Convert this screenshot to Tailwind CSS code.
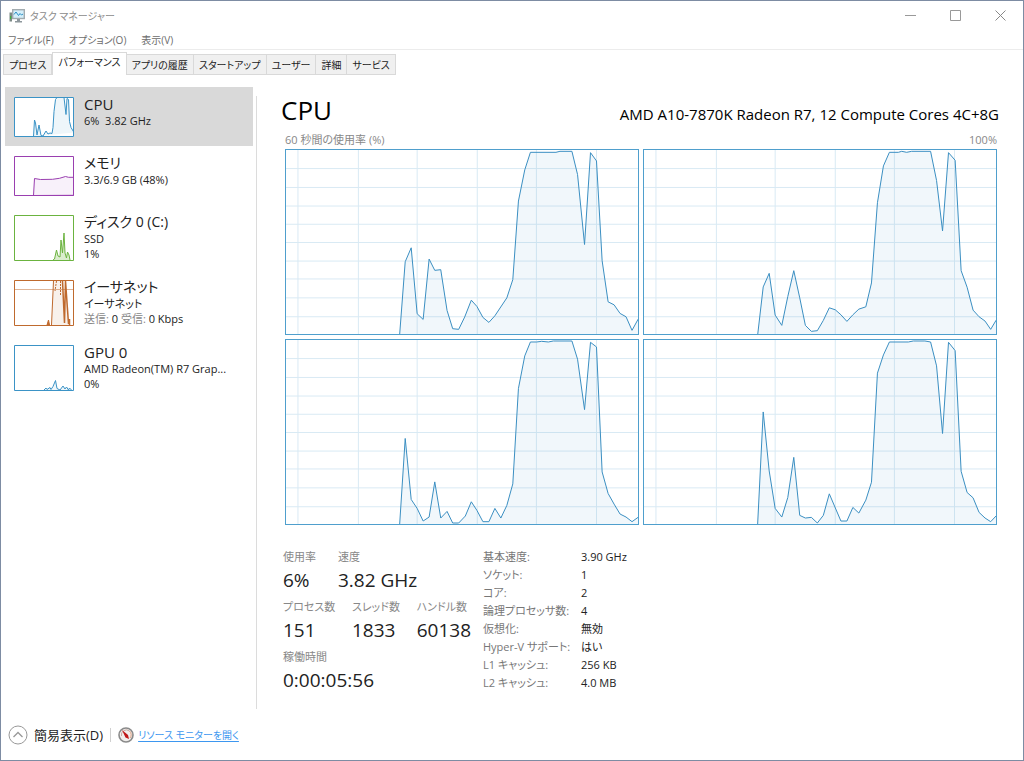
<!DOCTYPE html>
<html lang="ja">

<head>
    <meta charset="UTF-8">
    <meta name="viewport" content="width=device-width, initial-scale=1.0">
    <title>タスク マネージャー</title>
    <script src="https://cdn.jsdelivr.net/npm/@tailwindcss/browser@4"></script>
</head>

<body>
    <div class="min-h-screen flex flex-col bg-white border border-[#7d8ca3] text-[11px] leading-4 text-[#222] font-['Open_Sans','Noto_Sans_CJK_JP',sans-serif] [font-feature-settings:'palt']">

        <!-- Title bar -->
        <header class="flex items-center justify-between h-[29px] pl-2 text-[#8c8c8c]">
            <div class="flex items-center gap-[5px]">
                <svg class="w-4 h-4" viewBox="0 0 16 16">
                    <rect x="0.5" y="4.5" width="2.5" height="9" fill="#7c8a86" />
                    <rect x="1" y="8" width="1.2" height="3" fill="#3fb03f" />
                    <rect x="3.7" y="1.7" width="11.6" height="8.8" fill="#d4effa" stroke="#a2abaf" stroke-width="1.4" />
                    <path d="M5 6.500l2-2.500 2.500 3.500 1.500-2 1.500 1.500 1.500-1" fill="none" stroke="#2b8fc4" />
                    <path d="M8 11h3v2h2v1.500h-7V13h2z" fill="#8d979c" />
                </svg>
                <h1 class="text-[10px]">タスク マネージャー</h1>
            </div>
            <div class="flex">
                <button class="w-[45px] h-7 flex items-center justify-center" aria-label="最小化">
                    <svg class="w-[11px] h-[11px]" viewBox="0 0 11 11" fill="none" stroke="#999"><path d="M0 5.5h11" /></svg>
                </button>
                <button class="w-[45px] h-7 flex items-center justify-center" aria-label="最大化">
                    <svg class="w-[11px] h-[11px]" viewBox="0 0 11 11" fill="none" stroke="#999"><path d="M.5 .5h10v10H.5z" /></svg>
                </button>
                <button class="w-[45px] h-7 flex items-center justify-center" aria-label="閉じる">
                    <svg class="w-[11px] h-[11px]" viewBox="0 0 11 11" fill="none" stroke="#888"><path d="M.5 .5l10 10M10.5 .5l-10 10" /></svg>
                </button>
            </div>
        </header>

        <!-- Menu -->
        <nav class="flex items-center gap-[15px] h-5 pl-[7px] text-[10px] text-[#6c6c6c] border-b border-[#ececec]">
            <button>ファイル(F)</button>
            <button>オプション(O)</button>
            <button>表示(V)</button>
        </nav>

        <!-- Tabs -->
        <div class="self-start flex items-end h-[25px] ml-0.5 text-[10px] text-[#222] border-b border-[#d9d9d9]" role="tablist">
            <button class="h-5 px-[5px] bg-[#f0f0f0] border border-b-0 border-[#d9d9d9]" role="tab">プロセス</button>
            <button class="h-[23px] -mb-px px-[5px] pb-1 bg-white border border-b-0 border-[#d9d9d9]" role="tab" aria-selected="true">パフォーマンス</button>
            <button class="h-5 px-[5px] bg-[#f0f0f0] border border-b-0 border-l-0 border-[#d9d9d9]" role="tab">アプリの履歴</button>
            <button class="h-5 px-[5px] bg-[#f0f0f0] border border-b-0 border-l-0 border-[#d9d9d9]" role="tab">スタートアップ</button>
            <button class="h-5 px-[5px] bg-[#f0f0f0] border border-b-0 border-l-0 border-[#d9d9d9]" role="tab">ユーザー</button>
            <button class="h-5 px-[5px] bg-[#f0f0f0] border border-b-0 border-l-0 border-[#d9d9d9]" role="tab">詳細</button>
            <button class="h-5 px-[5px] bg-[#f0f0f0] border border-b-0 border-l-0 border-[#d9d9d9]" role="tab">サービス</button>
        </div>

        <div class="flex-1 flex pt-3">
            <!-- Resource list -->
            <aside class="w-[248px] ml-1 shrink-0">
                <button class="w-full flex items-start gap-2.5 pl-[9px] pb-[9px] bg-[#d9d9d9] text-left leading-[15px]">
                    <svg class="w-[60px] h-10 mt-2.5 bg-white" viewBox="0 0 60 40" fill="none" stroke="#3b93c6">
                        <path d="M19.500 39.500L20.500 23l1 3 1.500 12 2-10 2 10.500 2 .5 3-5 2 3 2-1 2 .5 1-6 1-16 1.500-12 1.500-2h7l2 17 1-16 1.500 1 1 22 1.500 6 3 5" fill="#117dbb" fill-opacity=".07" />
                        <path d="M.5 .5h59v39H.5z" />
                    </svg>
                    <span class="pt-2">
                        <span class="block text-[15px] leading-[18px]">CPU</span>
                        <span class="block whitespace-pre">6%  3.82 GHz</span>
                    </span>
                </button>
                <button class="w-full flex items-start gap-2.5 pl-[9px] pb-[9px] text-left leading-[15px]">
                    <svg class="w-[60px] h-10 mt-2.5" viewBox="0 0 60 40" fill="none" stroke="#9a3fb0">
                        <path d="M19.500 39.500L20.500 22.500l6 1 12-.2 7-1 6-1.800 3 .8h5v18z" fill="#8b12ae" fill-opacity=".06" />
                        <path d="M.5 .5h59v39H.5z" />
                    </svg>
                    <span class="pt-2">
                        <span class="block text-sm leading-[18px]">メモリ</span>
                        <span class="block">3.3/6.9 GB (48%)</span>
                    </span>
                </button>
                <button class="w-full flex items-start gap-2.5 pl-[9px] pb-[9px] text-left leading-[15px]">
                    <svg class="w-[60px] h-[46px] mt-2.5" viewBox="0 0 60 46" fill="none" stroke="#6bb33f">
                        <path d="M39 45l1.500-1 2-9 1.500 6 2 1 1-17 1.500 13 1.500-20 1 20 1.500 5 1-6 1.500 3 1 5" fill="#4da60c" fill-opacity=".2" />
                        <path d="M.5 .5h59v45H.5z" />
                    </svg>
                    <span class="pt-2">
                        <span class="block text-sm leading-[18px]">ディスク 0 (C:)</span>
                        <span class="block">SSD</span>
                        <span class="block">1%</span>
                    </span>
                </button>
                <button class="w-full flex items-start gap-2.5 pl-[9px] pb-[9px] text-left leading-[15px]">
                    <svg class="w-[60px] h-[46px] mt-2.5" viewBox="0 0 60 46" fill="none" stroke="#bf6a2e">
                        <path d="M37.500 45L39.500 1h10l1 43 1.500-43 3 37 1 7z" fill="#a74f01" fill-opacity=".08" stroke="none" />
                        <path d="M1 9.500h58" stroke-opacity=".5" />
                        <path d="M33 45l1.500-5 1 5z" fill="#bf6a2e" />
                        <path d="M37.500 45L39.500 1" />
                        <path d="M42.500 1L41 11M46.500 1v15" stroke-dasharray="2 1" />
                        <path d="M48.500 1l2 42L51.500 1l3 43M55.500 45v-6" stroke-width="1.500" />
                        <path d="M.5 .5h59v45H.5z" />
                    </svg>
                    <span class="pt-2">
                        <span class="block text-sm leading-[18px]">イーサネット</span>
                        <span class="block">イーサネット</span>
                        <span class="block"><span class="text-[#888]">送信:</span> 0 <span class="text-[#888]">受信:</span> 0 Kbps</span>
                    </span>
                </button>
                <button class="w-full flex items-start gap-2.5 pl-[9px] pb-[9px] text-left leading-[15px]">
                    <svg class="w-[60px] h-[46px] mt-2.5" viewBox="0 0 60 46" fill="none" stroke="#3b93c6">
                        <path d="M30 45l2-2 1 1.500 3-2 1 2 2-3 2.500-6 1.500 8 3 1.500 3-4 2 3 1.500-2 2 3 1-2 2 2" fill="#117dbb" fill-opacity=".07" />
                        <path d="M.5 .5h59v45H.5z" />
                    </svg>
                    <span class="pt-2">
                        <span class="block text-[15px] leading-[18px]">GPU 0</span>
                        <span class="block">AMD Radeon(TM) R7 Grap...</span>
                        <span class="block">0%</span>
                    </span>
                </button>
            </aside>

            <!-- Details -->
            <main class="flex-1 mt-[9px] ml-[3px] pl-6 pr-6 border-l border-[#dcdcdc]">
                <div class="flex items-baseline justify-between text-black">
                    <h2 class="text-[26px] leading-7">CPU</h2>
                    <p class="text-[15px]">AMD A10-7870K Radeon R7, 12 Compute Cores 4C+8G</p>
                </div>
                <div class="flex justify-between mt-2 pl-1 pr-0.5 text-[#888]">
                    <span>60 秒間の使用率 (%)</span>
                    <span>100%</span>
                </div>

                <svg class="hidden">
                    <defs>
                        <path id="grid" vector-effect="non-scaling-stroke" d="M36 0v555M218 0v555M395 0v555M576 0v555M754 0v555M935 0v555M0 56h1060M0 113h1060M0 169h1060M0 224h1060M0 279h1060M0 335h1060M0 389h1060M0 446h1060M0 503h1060" />
                    </defs>
                </svg>
                <div class="grid grid-cols-2 gap-1 mt-px pl-1 pr-0.5">
                    <svg class="w-full h-[186px] border border-[#4f9fcd]" viewBox="0 0 1060 555" preserveAspectRatio="none" fill="none">
                        <use href="#grid" stroke="#d9eaf4" />
                        <polyline vector-effect="non-scaling-stroke" fill="#117dbb" fill-opacity=".06" stroke="#3b8fc2" points="342,560 359,337 377,295 395,494 413,511 431,329 448,363 466,361 485,484 502,539 520,541 538,504 558,453 575,472 593,505 611,520 629,500 665,446 683,391 700,154 719,60 736,7 813,7 825,4 861,4 878,74 899,285 917,8 935,33 952,334 970,458 988,467 1006,493 1024,503 1042,544 1060,511 1066,500 1066,560" />
                    </svg>
                    <svg class="w-full h-[186px] border border-[#4f9fcd]" viewBox="0 0 1060 555" preserveAspectRatio="none" fill="none">
                        <use href="#grid" stroke="#d9eaf4" />
                        <polyline vector-effect="non-scaling-stroke" fill="#117dbb" fill-opacity=".06" stroke="#3b8fc2" points="342,560 359,413 377,372 395,498 415,529 433,442 451,364 469,446 486,529 504,547 522,545 540,514 558,476 576,482 593,497 611,517 629,497 647,480 668,473 685,401 703,159 721,48 739,7 766,7 776,4 791,7 806,4 863,4 881,92 899,244 917,8 937,31 955,364 973,414 991,483 1009,503 1027,516 1044,541 1060,514 1066,504 1066,560" />
                    </svg>
                    <svg class="w-full h-[186px] border border-[#4f9fcd]" viewBox="0 0 1060 555" preserveAspectRatio="none" fill="none">
                        <use href="#grid" stroke="#d9eaf4" />
                        <polyline vector-effect="non-scaling-stroke" fill="#117dbb" fill-opacity=".06" stroke="#3b8fc2" points="342,560 359,297 377,481 395,508 413,546 431,534 448,428 466,537 485,517 502,552 520,552 540,531 558,488 575,514 593,548 611,548 629,508 647,537 665,499 683,434 700,146 719,48 736,6 755,6 770,4 790,6 805,3 861,3 878,58 899,210 917,7 935,21 952,398 970,463 988,495 1006,525 1024,534 1042,548 1060,535 1066,530 1066,560" />
                    </svg>
                    <svg class="w-full h-[186px] border border-[#4f9fcd]" viewBox="0 0 1060 555" preserveAspectRatio="none" fill="none">
                        <use href="#grid" stroke="#d9eaf4" />
                        <polyline vector-effect="non-scaling-stroke" fill="#117dbb" fill-opacity=".06" stroke="#3b8fc2" points="342,560 359,217 377,395 395,508 415,534 433,475 451,354 469,529 486,537 504,535 522,552 540,529 558,464 593,546 611,546 629,505 647,522 668,483 685,429 703,100 721,45 739,6 796,6 811,3 846,3 863,6 881,78 899,282 917,7 937,32 955,396 973,460 991,476 1009,520 1027,537 1044,548 1060,531 1066,525 1066,560" />
                    </svg>
                </div>

                <div class="flex gap-3 mt-6 pl-0.5">
                    <div class="w-[188px]">
                        <dl class="flex gap-[22px] mb-1">
                            <div>
                                <dt class="text-[#888]">使用率</dt>
                                <dd class="text-[19px] leading-[30px]">6%</dd>
                            </div>
                            <div>
                                <dt class="text-[#888]">速度</dt>
                                <dd class="text-[19px] leading-[30px]">3.82 GHz</dd>
                            </div>
                        </dl>
                        <dl class="flex justify-between mb-1">
                            <div>
                                <dt class="text-[#888]">プロセス数</dt>
                                <dd class="text-[19px] leading-[30px]">151</dd>
                            </div>
                            <div>
                                <dt class="text-[#888]">スレッド数</dt>
                                <dd class="text-[19px] leading-[30px]">1833</dd>
                            </div>
                            <div>
                                <dt class="text-[#888]">ハンドル数</dt>
                                <dd class="text-[19px] leading-[30px]">60138</dd>
                            </div>
                        </dl>
                        <dl>
                            <dt class="text-[#888]">稼働時間</dt>
                            <dd class="text-[19px] leading-[30px]">0:00:05:56</dd>
                        </dl>
                    </div>
                    <dl class="grid grid-cols-[98px_auto] auto-rows-[18px] content-start">
                        <dt class="text-[#777]">基本速度:</dt>
                        <dd>3.90 GHz</dd>
                        <dt class="text-[#777]">ソケット:</dt>
                        <dd>1</dd>
                        <dt class="text-[#777]">コア:</dt>
                        <dd>2</dd>
                        <dt class="text-[#777]">論理プロセッサ数:</dt>
                        <dd>4</dd>
                        <dt class="text-[#777]">仮想化:</dt>
                        <dd>無効</dd>
                        <dt class="text-[#777]">Hyper-V サポート:</dt>
                        <dd>はい</dd>
                        <dt class="text-[#777]">L1 キャッシュ:</dt>
                        <dd>256 KB</dd>
                        <dt class="text-[#777]">L2 キャッシュ:</dt>
                        <dd>4.0 MB</dd>
                    </dl>
                </div>
            </main>
        </div>

        <!-- Footer -->
        <footer class="flex items-center h-[51px] pl-[7px] text-[13px]">
            <button class="flex items-center gap-1.5">
                <svg class="w-5 h-5" viewBox="0 0 20 20" fill="none" stroke="#999">
                    <circle cx="10" cy="10" r="9" />
                    <path d="M5.500 12L10 7.500l4.500 4.500" stroke-width="1.300" />
                </svg>
                簡易表示(D)
            </button>
            <span class="w-px h-3.5 mx-[7px] bg-[#d0d0d0]"></span>
            <svg class="w-4 h-4 mr-1" viewBox="0 0 16 16">
                <circle cx="8" cy="8" r="7" fill="#f1eeec" stroke="#8a8a8a" stroke-width="1.600" />
                <path d="M3.500 9a5 5 0 0 1 8-5" fill="none" stroke="#c9a9a0" />
                <path d="M11.500 4a5 5 0 0 1 .5 7" fill="none" stroke="#e0a080" />
                <path d="M4 3l3.500 7.500L11 12l-1-4z" fill="#c01818" />
            </svg>
            <a href="#" class="text-[10px] text-[#3d97f0] underline underline-offset-2">リソース モニターを開く</a>
        </footer>
    </div>
</body>

</html>
